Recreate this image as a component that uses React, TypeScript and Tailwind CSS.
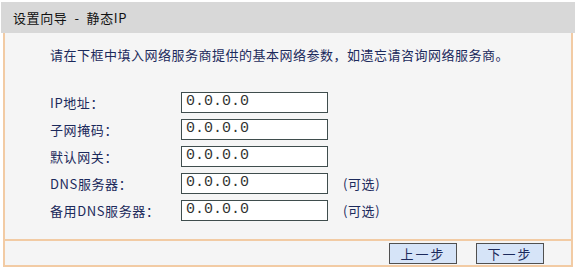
import React from "react";

const font = { fontFamily: '"Noto Sans CJK SC", "Noto Sans", sans-serif' };

function Row({ label, opt }: { label: string; opt?: boolean }) {
  return (
    <div className="flex items-center h-[21px]">
      <div className="w-[131px] text-[13px] leading-[21px] tracking-[0.6px] text-[#1c2a5c]">{label}</div>
      <div
        className="w-[147px] h-[21px] border border-[#3f4d4d] bg-white pl-[4px] flex items-center text-[15px] text-[#333]"
        style={{ fontFamily: '"Liberation Mono", monospace' }}
      >
        0.0.0.0
      </div>
      {opt && <div className="ml-[15px] text-[13px] tracking-[0.6px] text-[#1c2a5c]">(可选)</div>}
    </div>
  );
}

export default function App() {
  return (
    <div className="w-[575px] h-[270px] bg-white pt-[2px] overflow-hidden" style={font}>
      <div className="ml-[1px] h-[31px] bg-[#d8d8d8] flex items-center pl-[12px] text-[13px] tracking-[0.6px] text-[#111]">
        设置向导&nbsp; -&nbsp; 静态IP
      </div>
      <div className="ml-[3px] w-[570px] border-x-2 border-b-2 border-[#f2cba4] bg-[#f5f5f5]">
        <div className="h-[206px] pl-[45px] pt-[12px]">
          <div className="text-[13px] leading-[20px] tracking-[0.5px] text-[#1c2a5c]">
            请在下框中填入网络服务商提供的基本网络参数，如遗忘请咨询网络服务商。
          </div>
          <div className="mt-[27px] flex flex-col gap-[6px]">
            <Row label="IP地址：" />
            <Row label="子网掩码：" />
            <Row label="默认网关：" />
            <Row label="DNS服务器：" opt />
            <Row label="备用DNS服务器：" opt />
          </div>
        </div>
        <div className="h-[26px] border-t-2 border-[#f2cba4] flex items-center justify-end pr-[27px] gap-[19px]">
          <button className="w-[68px] h-[21px] border border-[#505050] bg-[#d6e4f8] text-[13px] leading-[19px] tracking-[2px] text-[#1c2a5c]">
            上一步
          </button>
          <button className="w-[68px] h-[21px] border border-[#505050] bg-[#d6e4f8] text-[13px] leading-[19px] tracking-[2px] text-[#1c2a5c]">
            下一步
          </button>
        </div>
      </div>
    </div>
  );
}
